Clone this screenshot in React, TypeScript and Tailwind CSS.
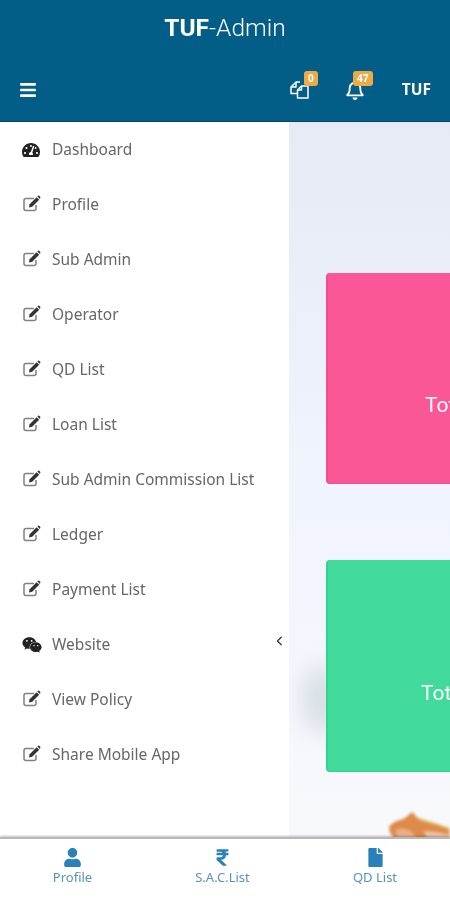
import { FaBars, FaFile, FaRegBell, FaRupeeSign, FaTachometerAlt, FaUser, FaWeixin } from "react-icons/fa";
import { FaChevronLeft } from "react-icons/fa6";

const menuItems = [
  { label: "Dashboard", icon: "dash" },
  { label: "Profile", icon: "edit" },
  { label: "Sub Admin", icon: "edit" },
  { label: "Operator", icon: "edit" },
  { label: "QD List", icon: "edit" },
  { label: "Loan List", icon: "edit" },
  { label: "Sub Admin Commission List", icon: "edit" },
  { label: "Ledger", icon: "edit" },
  { label: "Payment List", icon: "edit" },
  { label: "Website", icon: "chat" },
  { label: "View Policy", icon: "edit" },
  { label: "Share Mobile App", icon: "edit" },
];

function EditIcon() {
  return (
    <svg viewBox="0 0 18 17" className="-mt-[3px] ml-px h-[17px] w-[18px]" fill="none">
      <path d="M11 3.5 H3 Q1 3.5 1 5.5 V13.5 Q1 15.5 3 15.5 H11 Q13 15.5 13 13.5 V10" stroke="#808080" strokeWidth="1.5" />
      <path d="M6 12.5 L6.6 9.2 L13.6 2.2 L16.2 4.8 L9.2 11.8 Z" fill="#333" />
      <path d="M14.4 1.4 L15 0.8 Q15.6 0.3 16.2 0.8 L17.2 1.8 Q17.7 2.4 17.2 3 L16.9 3.9 Z" fill="#333" />
    </svg>
  );
}

function MenuIcon({ name }: { name: string }) {
  if (name === "dash") return <FaTachometerAlt className="text-[18px] text-[#222]" />;
  if (name === "chat") return <FaWeixin className="text-[20px] text-[#222]" />;
  return <EditIcon />;
}

function CopyIcon() {
  return (
    <svg viewBox="0 0 19 18" className="h-[18px] w-[19px]" fill="none" stroke="white" strokeWidth="1.5" strokeLinejoin="round">
      <path d="M10 1 H6 L1 6 V12.5 H7.5" />
      <path d="M6 1 V6 H1" />
      <path d="M7.5 9 L11.5 5 H18 V17 H7.5 Z" />
      <path d="M11.5 5 V9 H7.5" />
    </svg>
  );
}

function Badge({ children, className }: { children: string; className: string }) {
  return (
    <span className={`absolute h-[15px] rounded-[3px] bg-[#eeaa44] text-center text-[10px] leading-[15px] font-bold text-white ${className}`}>
      {children}
    </span>
  );
}

export default function App() {
  return (
    <div className="relative flex h-[900px] w-[450px] flex-col overflow-hidden bg-white font-['Noto_Sans',sans-serif] blur-[0.4px]">
      <header className="h-[122px] shrink-0 border-b border-[#0b3f6b] bg-[#025d87] text-white">
        <div className="flex h-[57px] items-center justify-center font-['Roboto',sans-serif] text-[24.5px] font-light">
          <span className="font-bold">TUF</span>-Admin
        </div>
        <div className="mt-px flex h-[63px] items-center px-[19px]">
          <FaBars className="text-[18px]" />
          <div className="relative ml-auto">
            <CopyIcon />
            <Badge className="-top-[10px] left-[14px] w-[14px]">0</Badge>
          </div>
          <div className="relative ml-[36px]">
            <FaRegBell className="text-[20px]" />
            <Badge className="-top-[9px] left-[8px] w-[20px]">47</Badge>
          </div>
          <span className="ml-[37px] text-[15.5px] font-bold">TUF</span>
        </div>
      </header>

      <div className="flex min-h-0 flex-1">
        <aside className="relative w-[289px] shrink-0 bg-white">
          <ul>
            {menuItems.map((item) => (
              <li key={item.label} className="flex h-[55px] items-center pl-[22px] text-[15.5px] text-[#666]">
                <span className="flex w-[30px] items-center">
                  <MenuIcon name={item.icon} />
                </span>
                {item.label}
              </li>
            ))}
          </ul>
          <FaChevronLeft className="absolute top-[514px] left-[275px] text-[10px] text-[#333]" />
        </aside>
        <main className="relative flex-1 overflow-hidden bg-gradient-to-b from-[#e5eaf5] via-[#f0f4fd] to-[#f8f9fd] pl-[37px]">
          <div className="absolute top-[545px] left-[14px] h-[65px] w-[40px] rounded-full bg-[#c3ced4] opacity-60 blur-[12px]" />
          <div className="relative flex flex-col pt-[151px] font-['Roboto',sans-serif] text-[21px] text-white">
            <div className="h-[211px] w-[300px] rounded-[4px] border-b border-l-2 border-[#f74a90] bg-[#fa5797] pt-[117px] pl-[97px]">
              Total QD
            </div>
            <div className="mt-[76px] h-[212px] w-[300px] rounded-[4px] border-b border-l-2 border-[#30d390] bg-[#41da9a] pt-[118px] pl-[93px]">
              Total QD
            </div>
          </div>
          <svg viewBox="0 0 62 28" className="absolute top-[689px] left-[98px] h-[28px] w-[63px] blur-[1.5px]">
            <path d="M2 15 Q6 10 16 8 L25 1 L30 7 Q45 12 62 19 V28 H8 Q0 22 2 15 Z" fill="#dd8a4a" />
            <path d="M8 19 Q20 13 30 28 H10 Z" fill="#ecae88" />
            <path d="M30 7 Q45 11 62 17 V19 Q45 14 30 9 Z" fill="#d8b050" />
            <path d="M36 20 Q50 20 62 24 V28 H40 Z" fill="#eec2a4" />
          </svg>
        </main>
      </div>

      <nav className="relative z-10 grid h-[63px] shrink-0 grid-cols-[145px_155px_150px] border-t-2 border-[#b8b8b8] bg-white text-[13px] leading-[18px] text-[#5a92b8] shadow-[0_-1px_2px_rgba(0,0,0,0.25)]">
        <div className="flex flex-col items-center gap-[1px] pt-[9px]">
          <FaUser className="text-[19px] text-[#2a80b9]" />
          <span>Profile</span>
        </div>
        <div className="flex flex-col items-center gap-[1px] pt-[9px]">
          <FaRupeeSign className="text-[19px] text-[#2a80b9]" />
          <span>S.A.C.List</span>
        </div>
        <div className="flex flex-col items-center gap-[1px] pt-[9px]">
          <FaFile className="text-[19px] text-[#2a80b9]" />
          <span>QD List</span>
        </div>
      </nav>
    </div>
  );
}
